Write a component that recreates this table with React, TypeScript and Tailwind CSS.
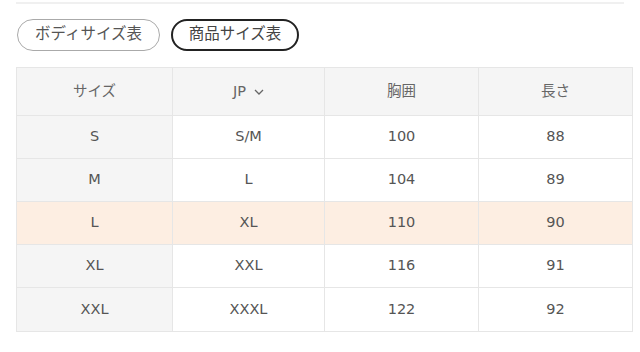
import React from "react";

const rows = [
  ["S", "S/M", "100", "88"],
  ["M", "L", "104", "89"],
  ["L", "XL", "110", "90"],
  ["XL", "XXL", "116", "91"],
  ["XXL", "XXXL", "122", "92"],
];

export default function App() {
  return (
    <div
      className="w-[640px] h-[352px] bg-white text-[#555] overflow-hidden"
      style={{ fontFamily: '"DejaVu Sans", "Noto Sans CJK JP", sans-serif' }}
    >
      <div className="mx-[16px] mt-[2px] h-[2px] bg-[#f0f0f0]" />
      <div className="flex gap-[11px] pl-[17px] pt-[15px]">
        <div className="h-[32px] w-[143px] rounded-full border border-[#aaa] flex items-center justify-center text-[15.5px] text-[#555]">
          ボディサイズ表
        </div>
        <div className="h-[32px] w-[128px] rounded-full border-2 border-[#222] flex items-center justify-center text-[15.5px] text-[#444]">
          商品サイズ表
        </div>
      </div>
      <div className="ml-[16px] mt-[16px] w-[617px] border border-[#e6e6e6] text-[14.5px]">
        <div className="grid grid-cols-[156px_152px_154px_1fr] h-[48px] bg-[#f5f5f5] border-b border-[#e6e6e6] text-[#666]">
          <div className="flex items-center justify-center border-r border-[#e6e6e6]">サイズ</div>
          <div className="flex items-center justify-center gap-[8px] border-r border-[#e6e6e6]">
            <span>JP</span>
            <svg width="10" height="6" viewBox="0 0 10 6" fill="none" stroke="#666" strokeWidth="1.3">
              <path d="M1 1l4 4 4-4" />
            </svg>
          </div>
          <div className="flex items-center justify-center border-r border-[#e6e6e6]">胸囲</div>
          <div className="flex items-center justify-center">長さ</div>
        </div>
        {rows.map((r, i) => {
          const hl = i === 2;
          return (
            <div
              key={i}
              className={`grid grid-cols-[156px_152px_154px_1fr] h-[43px] ${i < rows.length - 1 ? "border-b border-[#e6e6e6]" : ""} ${hl ? "bg-[#fdeee2]" : ""}`}
            >
              <div className={`flex items-center justify-center border-r border-[#e6e6e6] ${hl ? "" : "bg-[#f5f5f5]"}`}>{r[0]}</div>
              <div className="flex items-center justify-center border-r border-[#e6e6e6]">{r[1]}</div>
              <div className="flex items-center justify-center border-r border-[#e6e6e6]">{r[2]}</div>
              <div className="flex items-center justify-center">{r[3]}</div>
            </div>
          );
        })}
      </div>
    </div>
  );
}
